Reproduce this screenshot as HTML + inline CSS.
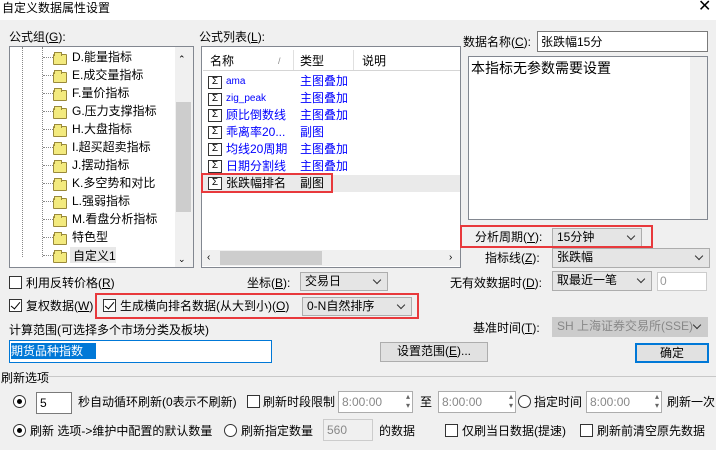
<!DOCTYPE html>
<html><head><meta charset="utf-8"><style>
*{box-sizing:border-box;margin:0;padding:0}
body{width:716px;height:450px;background:#f0f0f0;position:relative;overflow:hidden;font:12px "Liberation Sans","Noto Sans CJK SC","WenQuanYi Zen Hei",sans-serif;color:#000}
.a{position:absolute;white-space:nowrap;line-height:14px}
.box{position:absolute;background:#fff;border:1px solid #828790}
.cb{position:absolute;width:13px;height:13px;border:1px solid #333;background:#fff}
.cb.on::after{content:"";position:absolute;left:3px;top:0px;width:4px;height:8px;border:solid #000;border-width:0 1.5px 1.5px 0;transform:rotate(40deg)}
.rb{position:absolute;width:13px;height:13px;border:1px solid #333;border-radius:50%;background:#fff}
.rb.on::after{content:"";position:absolute;left:3px;top:3px;width:5px;height:5px;border-radius:50%;background:#000}
.combo{position:absolute;background:#e5e5e5;border:1px solid #adadad;padding-left:4px;line-height:17px;overflow:hidden;white-space:nowrap}
.combo::after{content:"";position:absolute;right:7px;top:4px;width:5px;height:5px;border:solid #333;border-width:0 1px 1px 0;transform:rotate(45deg)}
.red{position:absolute;border:2px solid #e8393c}
.fold{position:absolute;width:14px;height:11px;background:#f3ea7e;border:1px solid #9a8a3a;border-radius:1px}
.fold::before{content:"";position:absolute;left:0;top:-3px;width:6px;height:3px;background:#f3ea7e;border:1px solid #9a8a3a;border-bottom:none}
.sig{position:absolute;width:14px;height:13px;border:1px solid #333;background:#fff;font-size:10px;line-height:9px;text-align:center}
.blue{color:#0000ff}
.spin{position:absolute;background:#fff;border:1px solid #adadad;color:#888;padding-left:3px;line-height:18px}
.spin::after{content:"▴\A▾";white-space:pre;position:absolute;right:2px;top:0;font-size:8px;line-height:9px;color:#666}
.btn{position:absolute;background:#e1e1e1;border:1px solid #adadad;text-align:center;line-height:17px}
</style></head><body>
<div style="position:absolute;left:0;top:0;width:716px;height:20px;background:#fff"></div>
<div class="a" style="left:2px;top:1px">自定义数据属性设置</div>
<div class="a" style="left:698px;top:0px;font-size:16px">✕</div>

<div class="a" style="left:9px;top:30px">公式组(<u>G</u>):</div>
<div class="box" style="left:9px;top:46px;width:185px;height:222px"></div>
<div style="position:absolute;left:175px;top:47px;width:18px;height:220px;background:#f0f0f0"></div>
<div style="position:absolute;left:176px;top:102px;width:15px;height:110px;background:#cdcdcd"></div>
<div class="a" style="left:178px;top:52px;font-size:9px">⌃</div>
<div class="a" style="left:178px;top:252px;font-size:9px">⌄</div>
<div style="position:absolute;left:22px;top:47px;height:210px;border-left:1px dotted #888"></div>
<div style="position:absolute;left:42px;top:47px;height:210px;border-left:1px dotted #888"></div>
<div class="a" style="left:72px;top:50px">D.能量指标</div>
<div class="a" style="left:72px;top:68px">E.成交量指标</div>
<div class="a" style="left:72px;top:86px">F.量价指标</div>
<div class="a" style="left:72px;top:104px">G.压力支撑指标</div>
<div class="a" style="left:72px;top:122px">H.大盘指标</div>
<div class="a" style="left:72px;top:140px">I.超买超卖指标</div>
<div class="a" style="left:72px;top:158px">J.摆动指标</div>
<div class="a" style="left:72px;top:176px">K.多空势和对比</div>
<div class="a" style="left:72px;top:194px">L.强弱指标</div>
<div class="a" style="left:72px;top:212px">M.看盘分析指标</div>
<div class="a" style="left:72px;top:230px">特色型</div>
<div style="position:absolute;left:70px;top:247px;width:46px;height:16px;background:#e8e8e8"></div>
<div class="a" style="left:73px;top:249px">自定义1</div>

<div class="a" style="left:199px;top:30px">公式列表(<u>L</u>):</div>
<div class="box" style="left:201px;top:46px;width:260px;height:222px"></div>
<div style="position:absolute;left:203px;top:49px;width:257px;height:22px;background:#fff;border-bottom:1px solid #d5d5d5"></div>
<div style="position:absolute;left:293px;top:50px;height:20px;border-left:1px solid #e0e0e0"></div>
<div style="position:absolute;left:353px;top:50px;height:20px;border-left:1px solid #e0e0e0"></div>
<div class="a" style="left:210px;top:54px">名称</div>
<div class="a" style="left:278px;top:54px;color:#888;font-size:9px">/</div>
<div class="a" style="left:300px;top:54px">类型</div>
<div class="a" style="left:362px;top:54px">说明</div>
<div style="position:absolute;left:202px;top:175px;width:258px;height:17px;background:#eaeaea"></div>
<div style="position:absolute;left:202px;top:250px;width:258px;height:16px;background:#f0f0f0"></div>
<div style="position:absolute;left:220px;top:251px;width:102px;height:14px;background:#cdcdcd"></div>
<div class="a" style="left:207px;top:251px;font-size:10px">‹</div>
<div class="a" style="left:449px;top:251px;font-size:10px">›</div>
<div class="a blue" style="left:226px;top:75px;font-size:10px">ama</div><div class="a blue" style="left:300px;top:74px">主图叠加</div>
<div class="a blue" style="left:226px;top:92px;font-size:10px">zig_peak</div><div class="a blue" style="left:300px;top:91px">主图叠加</div>
<div class="a blue" style="left:226px;top:108px">顾比倒数线</div><div class="a blue" style="left:300px;top:108px">主图叠加</div>
<div class="a blue" style="left:226px;top:125px">乖离率20...</div><div class="a blue" style="left:300px;top:125px">副图</div>
<div class="a blue" style="left:226px;top:142px">均线20周期</div><div class="a blue" style="left:300px;top:142px">主图叠加</div>
<div class="a blue" style="left:226px;top:159px">日期分割线</div><div class="a blue" style="left:300px;top:159px">主图叠加</div>
<div class="a" style="left:226px;top:176px">张跌幅排名</div><div class="a" style="left:300px;top:176px">副图</div>
<div class="red" style="left:201px;top:173px;width:132px;height:20px"></div>

<div class="a" style="left:463px;top:35px">数据名称(<u>C</u>):</div>
<div class="box" style="left:537px;top:31px;width:171px;height:21px;border-color:#7a7a7a"></div>
<div class="a" style="left:541px;top:35px">张跌幅15分</div>
<div class="box" style="left:468px;top:56px;width:240px;height:164px"></div>
<div style="position:absolute;left:690px;top:57px;width:17px;height:162px;background:#f0f0f0"></div>
<div class="a" style="left:471px;top:60px;font-size:14px;line-height:16px">本指标无参数需要设置</div>
<div class="a" style="left:475px;top:230px">分析周期(<u>Y</u>):</div>
<div class="combo" style="left:552px;top:228px;width:90px;height:19px">15分钟</div>
<div class="red" style="left:460px;top:225px;width:193px;height:23px"></div>
<div class="a" style="left:485px;top:251px">指标线(<u>Z</u>):</div>
<div class="combo" style="left:552px;top:248px;width:158px;height:20px">张跌幅</div>

<div class="cb" style="left:9px;top:276px"></div>
<div class="a" style="left:26px;top:276px">利用反转价格(<u>R</u>)</div>
<div class="a" style="left:247px;top:276px">坐标(<u>B</u>):</div>
<div class="combo" style="left:300px;top:272px;width:88px;height:19px">交易日</div>
<div class="a" style="left:450px;top:276px">无有效数据时(<u>D</u>):</div>
<div class="combo" style="left:552px;top:271px;width:100px;height:20px">取最近一笔</div>
<div class="box" style="left:657px;top:272px;width:50px;height:19px;border-color:#ccc;color:#999;padding-left:2px;line-height:17px">0</div>

<div class="cb on" style="left:9px;top:299px"></div>
<div class="a" style="left:26px;top:299px">复权数据(<u>W</u>)</div>
<div class="cb on" style="left:103px;top:299px"></div>
<div class="a" style="left:120px;top:299px">生成横向排名数据(从大到小)(<u>O</u>)</div>
<div class="combo" style="left:302px;top:297px;width:110px;height:19px">0-N自然排序</div>
<div class="red" style="left:95px;top:293px;width:324px;height:26px"></div>
<div class="a" style="left:473px;top:321px">基准时间(<u>T</u>):</div>
<div class="combo" style="left:552px;top:317px;width:156px;height:20px;background:#ccc;color:#888;border-color:#ccc">SH 上海证券交易所(SSE)</div>

<div class="a" style="left:9px;top:323px">计算范围(可选择多个市场分类及板块)</div>
<div class="box" style="left:9px;top:340px;width:263px;height:23px;border-color:#0078d7"></div>
<div style="position:absolute;left:11px;top:343px;width:85px;height:16px;background:#0078d7"></div>
<div class="a" style="left:11px;top:344px;color:#fff">期货品种指数</div>
<div class="btn" style="left:380px;top:342px;width:108px;height:20px">设置范围(<u>E</u>)...</div>
<div class="btn" style="left:635px;top:343px;width:74px;height:20px;border:2px solid #0078d7">确定</div>

<div class="a" style="left:1px;top:371px">刷新选项</div>
<div style="position:absolute;left:43px;top:376px;width:673px;border-top:1px solid #c8c8c8"></div>

<div class="rb on" style="left:13px;top:395px"></div>
<div class="box" style="left:36px;top:392px;width:36px;height:22px;border-color:#7a7a7a;padding-left:3px;line-height:20px">5</div>
<div class="a" style="left:78px;top:395px">秒自动循环刷新(0表示不刷新)</div>
<div class="cb" style="left:247px;top:395px"></div>
<div class="a" style="left:263px;top:395px">刷新时段限制</div>
<div class="spin" style="left:338px;top:391px;width:75px;height:22px;line-height:20px">8:00:00</div>
<div class="a" style="left:420px;top:395px">至</div>
<div class="spin" style="left:438px;top:391px;width:78px;height:22px;line-height:20px">8:00:00</div>
<div class="rb" style="left:518px;top:395px"></div>
<div class="a" style="left:534px;top:395px">指定时间</div>
<div class="spin" style="left:586px;top:391px;width:76px;height:22px;line-height:20px">8:00:00</div>
<div class="a" style="left:667px;top:395px">刷新一次</div>

<div class="rb on" style="left:13px;top:424px"></div>
<div class="a" style="left:30px;top:424px">刷新 选项-&gt;维护中配置的默认数量</div>
<div class="rb" style="left:224px;top:424px"></div>
<div class="a" style="left:241px;top:424px">刷新指定数量</div>
<div class="box" style="left:323px;top:419px;width:50px;height:22px;border-color:#ccc;background:#f0f0f0;color:#888;padding-left:3px;line-height:20px">560</div>
<div class="a" style="left:379px;top:424px">的数据</div>
<div class="cb" style="left:445px;top:424px"></div>
<div class="a" style="left:462px;top:424px">仅刷当日数据(提速)</div>
<div class="cb" style="left:580px;top:424px"></div>
<div class="a" style="left:597px;top:424px">刷新前清空原先数据</div>
<script>
var h='';
for(var i=0;i<12;i++){var y=52+i*18;h+='<div style="position:absolute;left:43px;top:'+(y+5)+'px;width:10px;border-top:1px dotted #888"></div><div class="fold" style="left:53px;top:'+(y+2)+'px"></div>';}
var s=document.createElement('div');s.innerHTML=h;document.body.appendChild(s);
var ys=[75,92,108,125,142,159,176],h2='';
for(var j=0;j<7;j++){h2+='<div class="sig" style="left:208px;top:'+(ys[j]+1)+'px">Σ</div>';}
var s2=document.createElement('div');s2.innerHTML=h2;document.body.appendChild(s2);
</script>
</body></html>
